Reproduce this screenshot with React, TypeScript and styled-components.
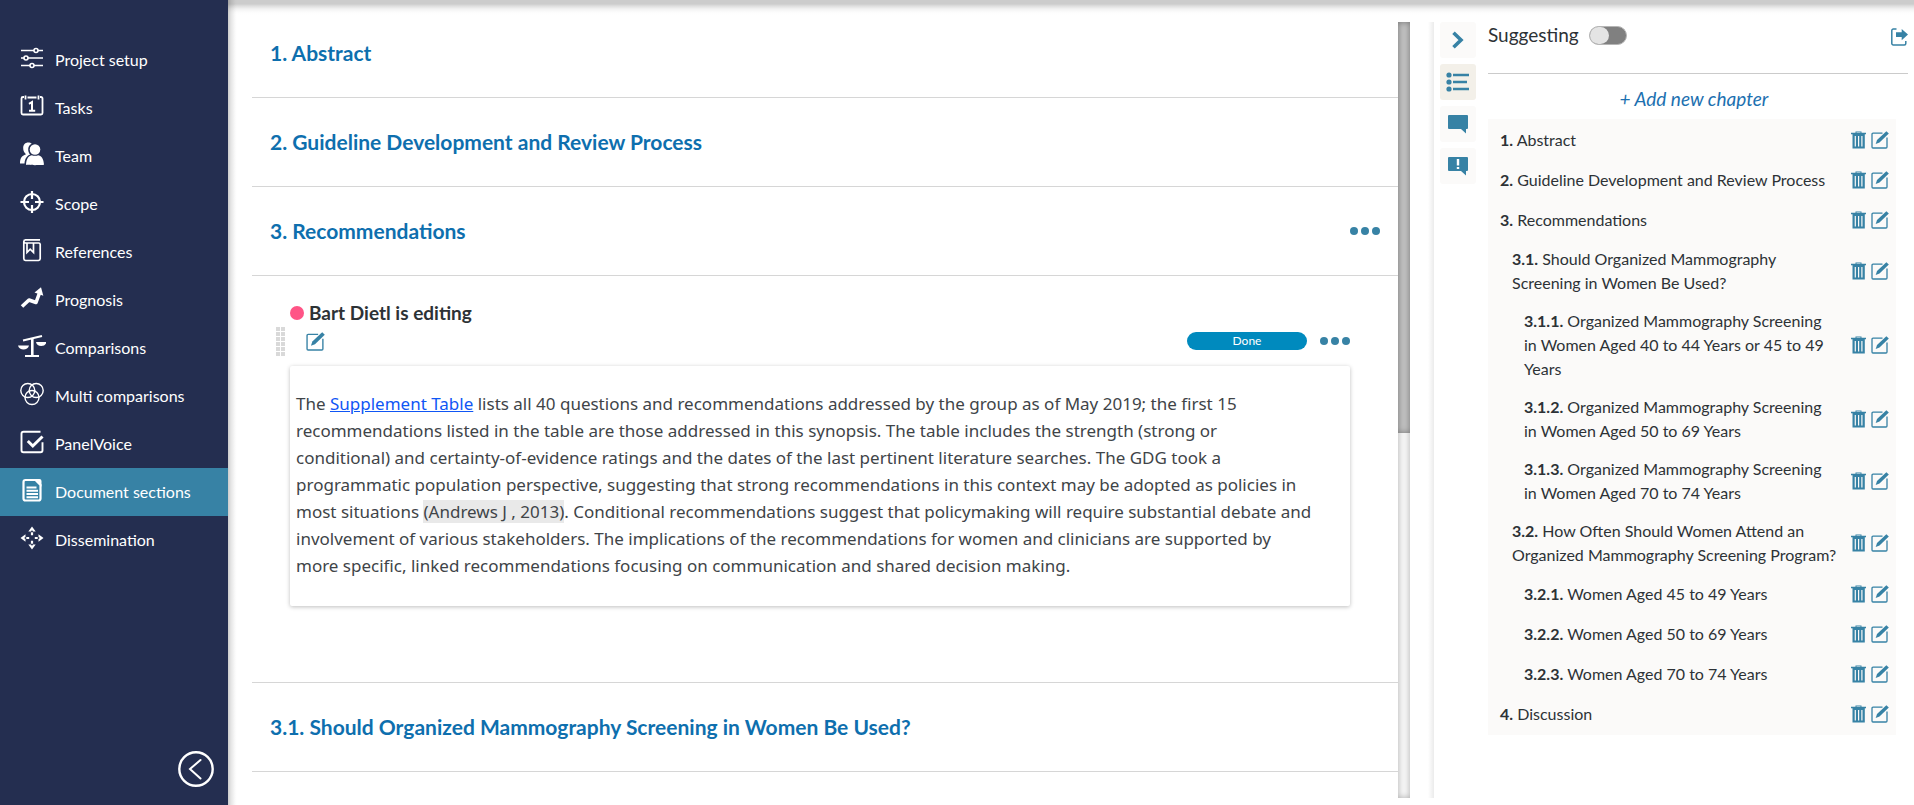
import React from "react";
import styled, { createGlobalStyle } from "styled-components";

const sans = `Lato, "Noto Sans", sans-serif`;
const teal = "#3782a5";
const navy = "#242e50";

const GlobalStyle = createGlobalStyle`
  *, *::before, *::after { box-sizing: border-box; }
  body { margin: 0; background: #fff; color: #2d3236; font-family: ${sans}; }
  button { font-family: inherit; padding: 0; border: 0; background: none; cursor: pointer; }
  h2, p, ol, ul { margin: 0; padding: 0; }
  ul, ol { list-style: none; }
  svg { display: block; }
`;

const Page = styled.div`
  display: flex;
  height: 100vh;
  overflow: hidden;
`;

const Sidebar = styled.nav`
  display: flex;
  flex-direction: column;
  justify-content: space-between;
  flex: none;
  width: 228px;
  padding: 36px 0 18px;
  background: ${navy};
`;

const NavLink = styled.a<{ $active?: boolean }>`
  display: flex;
  align-items: center;
  gap: 9px;
  height: 48px;
  padding: 0 0 2px 18px;
  background: ${(p) => (p.$active ? teal : "transparent")};
  color: #fff;
  font-size: 16px;
  line-height: 24px;
  text-decoration: none;

  svg { flex: none; margin-bottom: 2px; }
  span { padding-top: 2px; }
`;

const CollapseButton = styled.button`
  align-self: flex-end;
  margin-right: 14px;
  color: #fff;
`;

const Workspace = styled.div`
  display: flex;
  flex: 1;
  min-width: 0;
  padding: 22px 0 7px 24px;
  background:
    linear-gradient(to bottom, rgba(0, 0, 0, 0.2) 4px, rgba(0, 0, 0, 0.13) 6px, rgba(0, 0, 0, 0.05) 9px, rgba(0, 0, 0, 0.01) 12px, transparent 15px),
    linear-gradient(to right, rgba(0, 0, 0, 0.2), rgba(0, 0, 0, 0.1) 3px, rgba(0, 0, 0, 0.02) 7px, transparent 9px);
`;

const Document = styled.main`
  flex: 1;
  min-width: 0;
  overflow: hidden;
`;

const ScrollTrack = styled.div`
  flex: none;
  width: 12px;
  margin-right: 16px;
  background: #f6f6f6;
  box-shadow: inset 0 0 6px rgba(0, 0, 0, 0.3);
`;

const ScrollThumb = styled.div`
  height: 53%;
  background: #c0c0c0;
  box-shadow: inset 0 0 6px rgba(0, 0, 0, 0.4);
`;

const SectionHeader = styled.header<{ $first?: boolean }>`
  display: flex;
  align-items: center;
  justify-content: space-between;
  height: ${(p) => (p.$first ? 76 : 89)}px;
  padding: 0 18px ${(p) => (p.$first ? 14 : 0)}px;
  border-bottom: 1px solid #d6d6d6;
`;

const SectionTitle = styled.h2`
  color: #0e6fae;
  font-size: 21px;
  font-weight: 700;
  line-height: 28px;
`;

const DotsButton = styled.button`
  display: flex;
  gap: 3px;

  i { width: 8px; height: 8px; border-radius: 50%; background: ${teal}; }
`;

const SectionBody = styled.section`
  padding: 23px 48px 76px 24px;
  border-bottom: 1px solid #d6d6d6;
`;

const Editing = styled.div`
  display: flex;
  align-items: center;
  gap: 5px;
  padding-left: 14px;
  font-size: 19px;
  font-weight: 700;
  line-height: 27px;

  &::before { content: ""; width: 14px; height: 14px; border-radius: 50%; background: #ff5486; }
`;

const BlockTools = styled.div`
  display: flex;
  align-items: center;
  height: 30px;
  margin-bottom: 10px;
`;

const DragHandle = styled.div`
  display: grid;
  grid-template-columns: 4px 4px;
  grid-auto-rows: 4px;
  gap: 1px;
  margin-right: 21px;

  i { background: #d9d9d9; }
`;

const IconButton = styled.button`
  display: block;
  color: ${teal};
`;

const DoneButton = styled.button`
  width: 120px;
  height: 18px;
  margin: 0 13px 0 auto;
  border-radius: 9px;
  background: #008abe;
  color: #fff;
  font-size: 12px;
  line-height: 18px;
`;

const Editor = styled.div`
  margin-left: 14px;
  padding: 24px 0 27px 6px;
  border-radius: 2px;
  box-shadow: 0 1px 4px rgba(0, 0, 0, 0.26);
  color: #404448;
  font-family: "Noto Sans", sans-serif;
  font-size: 17px;
  line-height: 27px;

  a { color: #0f56f5; }
`;

const Citation = styled.span`
  background: #e9e9e9;
`;

const Panel = styled.aside`
  display: flex;
  flex: none;
  gap: 12px;
  width: 488px;
  padding: 0 6px 0 0;
`;

const PanelTabs = styled.div`
  display: flex;
  flex-direction: column;
  gap: 6px;
  padding-left: 14px;
  background: linear-gradient(to right, transparent 2px, rgba(0, 0, 0, 0.08) 8px, transparent 8px);
`;

const PanelTab = styled.button<{ $active?: boolean }>`
  display: flex;
  align-items: center;
  justify-content: center;
  width: 36px;
  height: 36px;
  border-radius: 3px;
  background: ${(p) => (p.$active ? "#f3f0e9" : "#fbfaf9")};
  color: ${teal};
`;

const Outline = styled.div`
  flex: 1;
  min-width: 0;
`;

const OutlineBar = styled.div`
  display: flex;
  align-items: flex-start;
  justify-content: space-between;
  height: 52px;
  border-bottom: 1px solid #cbcbcb;

  > button { margin-top: 6px; }
`;

const SuggestLabel = styled.label`
  display: flex;
  align-items: center;
  gap: 10px;
  font-size: 19px;
  line-height: 26px;
`;

const Switch = styled.input`
  display: flex;
  appearance: none;
  width: 38px;
  height: 19px;
  margin: 0;
  border: 1px solid #b5b5b5;
  border-radius: 10px;
  background: #808080;

  &::before {
    content: "";
    width: 19px;
    height: 17px;
    border-radius: 9px;
    background: #e4e4e4;
  }
`;

const AddChapter = styled.button`
  display: block;
  width: 100%;
  height: 45px;
  padding: 4px 8px 0 0;
  color: #1c70b0;
  font-size: 19px;
  font-style: italic;
  line-height: 28px;
`;

const ChapterList = styled.ol`
  width: calc(100% - 12px);
  padding: 1px 0;
  background: #fbfaf9;
`;

const ChapterRow = styled.li<{ $depth: number }>`
  display: flex;
  align-items: center;
  gap: 5px;
  min-height: 40px;
  padding: 7px 7px 7px ${(p) => 12 + p.$depth * 12}px;
  font-size: 16px;
  line-height: 24px;

  > span { flex: 1; padding-right: ${(p) => (p.$depth > 1 ? 12 : 0)}px; }
`;

type IconName =
  | "setup" | "tasks" | "team" | "scope" | "references" | "prognosis"
  | "comparisons" | "multi" | "panel" | "document" | "dissemination";

const S = { fill: "none", stroke: "currentColor" };

const navShapes: Record<IconName, React.ReactNode> = {
  setup: (
    <g {...S} strokeWidth="1.6">
      <path d="M3 6.5h13M20 6.5h5M3 14h3M10 14h15M3 21.500h9M16 21.500h9" />
      <circle cx="18" cy="6.500" r="2" /><circle cx="8" cy="14" r="2" /><circle cx="14" cy="21.500" r="2" />
    </g>
  ),
  tasks: (
    <>
      <path {...S} strokeWidth="1.8" d="M6 5H5a1.500 1.500 0 0 0-1.500 1.500V21A1.500 1.500 0 0 0 5 22.500h18a1.500 1.500 0 0 0 1.500-1.500V6.500A1.500 1.500 0 0 0 23 5h-1M9.500 5.500h9M7.500 3.500v4M20.500 3.500v4" />
      <path {...S} strokeWidth="2" d="M11 11.800l3-1.800v8.800M11 18.800h6.200" />
    </>
  ),
  team: (
    <g fill="currentColor">
      <path d="M2 23.500c0-5 1.500-7.800 6-9.300C5.800 12.500 5.200 10.400 5.200 8c0-3.300 2-5.500 5-5.500 1.500 0 2.700.5 3.500 1.300-2.500 1.200-3.700 3.400-3.500 6.200.1 1.900.9 3.500 2 4.600-3.500 1.500-5.300 4-5.700 8.900z" />
      <circle cx="17" cy="9.500" r="5.300" />
      <path d="M8 24.800c.2-5.800 2.800-9.500 6-9.500.8.7 5.200.7 6 0 3.200 0 5.800 3.700 6 9.500-.6.5-17.400.5-18 0z" />
    </g>
  ),
  scope: (
    <g {...S} strokeWidth="2.200">
      <circle cx="14" cy="14" r="8" />
      <path d="M14 3v8M14 17v8M2.500 14H11M17 14h8.500" />
    </g>
  ),
  references: (
    <g {...S} strokeWidth="1.700">
      <path d="M22 3.800H7.500A2 2 0 0 0 5.800 5.500v17A2 2 0 0 0 7.500 24.500h13a2 2 0 0 0 1.700-1.800V8.300A1.500 1.500 0 0 0 20.800 7H7.500a1.600 1.600 0 0 1 0-3.200" />
      <path d="M9 7v9.500l3.200-3.300 3.300 3.300V7" />
    </g>
  ),
  prognosis: (
    <>
      <path {...S} strokeWidth="3.600" strokeLinejoin="round" d="M4 22.500l7-6.500 7 2.500L21.500 9" />
      <path fill="currentColor" d="M16.500 8.500L23 3.200l2.300 8.600z" />
    </>
  ),
  comparisons: (
    <>
      <path {...S} strokeWidth="2" d="M5 8.500l19-4.500M7 24h14" />
      <path {...S} strokeWidth="2.600" d="M14.300 6v18" />
      <path fill="currentColor" d="M0 13.500h11c-.5 2.800-3 4-5.500 4S.5 16.300 0 13.500zM18 10h10.500c-.5 2.800-2.700 4-5.300 4s-4.800-1.200-5.200-4z" />
    </>
  ),
  multi: (
    <g {...S} strokeWidth="1.400">
      <circle cx="9.800" cy="10.500" r="7" /><circle cx="18.200" cy="10.500" r="7" /><circle cx="14" cy="17.500" r="7" />
    </g>
  ),
  panel: (
    <>
      <path {...S} strokeWidth="1.900" d="M22.500 3.800H5.500a2 2 0 0 0-2 2v16.500a2 2 0 0 0 2 2h17a2 2 0 0 0 2-2v-8" />
      <path {...S} strokeWidth="3" d="M9.800 13l5 5 9.700-9.500" />
    </>
  ),
  document: (
    <>
      <path {...S} strokeWidth="2.200" d="M7.500 4h10l5 5v13.500a2 2 0 0 1-2 2h-13a2 2 0 0 1-2-2V6a2 2 0 0 1 2-2z" />
      <path fill="currentColor" d="M15.500 3h6a2 2 0 0 1 2 2v6c-1.200-4-4-6.500-8-8z" />
      <path {...S} strokeWidth="1.900" d="M8.500 11.500h10M8.500 14.800h11.500M8.500 18h11.500M8.500 21.200h11.500" />
    </>
  ),
  dissemination: (
    <>
      <path fill="currentColor" d="M14 2.500l3.700 5h-7.400zM14 25.500l3.700-5h-7.400zM2.500 14l5-3.700v7.400zM25.500 14l-5-3.700v7.400z" />
      <path {...S} strokeWidth="2.200" d="M14 6v5.200M14 16.800V22M6 14h5.200M16.800 14H22" />
      <g fill={navy}><circle cx="14" cy="7.500" r="1" /><circle cx="14" cy="20.500" r="1" /><circle cx="7.500" cy="14" r="1" /><circle cx="20.500" cy="14" r="1" /></g>
    </>
  ),
};

const NavIcon = ({ name }: { name: IconName }) => (
  <svg width="28" height="28" viewBox="0 0 28 28" aria-hidden="true">{navShapes[name]}</svg>
);

const EditIcon = ({ size = 18 }: { size?: number }) => (
  <svg width={size} height={size} viewBox="0 0 18 18" aria-hidden="true">
    <path {...S} strokeWidth="1.300" d="M11.500 2.200H2a1 1 0 0 0-1 1V16a1 1 0 0 0 1 1h13a1 1 0 0 0 1-1V6.500" />
    <path fill="currentColor" d="M4.700 13l1.300-4L14.300 1.200 15.400.2l2.400 2.300-1 1L8.500 11.600z" />
  </svg>
);

const TrashIcon = () => (
  <svg width="15" height="18" viewBox="0 0 15 18" aria-hidden="true">
    <path fill="currentColor" fillRule="evenodd" d="M0 1.700h4.500V.4h6v1.300H15v1.600h-1.200V17.400H1.500V3.300H0zM5.500 1.200v.6h4v-.6zM3.700 5v10.500h1.200V5zM7 5v10.500h1.200V5zM10.300 5v10.500h1.200V5z" />
  </svg>
);

const Dots = ({ label }: { label: string }) => (
  <DotsButton type="button" aria-label={label}><i /><i /><i /></DotsButton>
);

const navItems: { icon: IconName; label: string }[] = [
  { icon: "setup", label: "Project setup" },
  { icon: "tasks", label: "Tasks" },
  { icon: "team", label: "Team" },
  { icon: "scope", label: "Scope" },
  { icon: "references", label: "References" },
  { icon: "prognosis", label: "Prognosis" },
  { icon: "comparisons", label: "Comparisons" },
  { icon: "multi", label: "Multi comparisons" },
  { icon: "panel", label: "PanelVoice" },
  { icon: "document", label: "Document sections" },
  { icon: "dissemination", label: "Dissemination" },
];

const chapters: [string, string][] = [
  ["1.", "Abstract"],
  ["2.", "Guideline Development and Review Process"],
  ["3.", "Recommendations"],
  ["3.1.", "Should Organized Mammography Screening in Women Be Used?"],
  ["3.1.1.", "Organized Mammography Screening in Women Aged 40 to 44 Years or 45 to 49 Years"],
  ["3.1.2.", "Organized Mammography Screening in Women Aged 50 to 69 Years"],
  ["3.1.3.", "Organized Mammography Screening in Women Aged 70 to 74 Years"],
  ["3.2.", "How Often Should Women Attend an Organized Mammography Screening Program?"],
  ["3.2.1.", "Women Aged 45 to 49 Years"],
  ["3.2.2.", "Women Aged 50 to 69 Years"],
  ["3.2.3.", "Women Aged 70 to 74 Years"],
  ["4.", "Discussion"],
];

export default function App() {
  return (
    <Page>
      <GlobalStyle />
      <Sidebar aria-label="Project">
        <ul>
          {navItems.map(({ icon, label }) => (
            <li key={icon}>
              <NavLink href="#" $active={icon === "document"}>
                <NavIcon name={icon} />
                <span>{label}</span>
              </NavLink>
            </li>
          ))}
        </ul>
        <CollapseButton type="button" aria-label="Collapse menu">
          <svg width="36" height="36" viewBox="0 0 36 36" aria-hidden="true">
            <circle {...S} strokeWidth="2.400" cx="18" cy="18" r="16.700" />
            <path {...S} strokeWidth="2" strokeLinecap="round" d="M22.500 9L12 18l10.500 9.500" />
          </svg>
        </CollapseButton>
      </Sidebar>

      <Workspace>
        <Document>
          <SectionHeader $first><SectionTitle>1. Abstract</SectionTitle></SectionHeader>
          <SectionHeader><SectionTitle>2. Guideline Development and Review Process</SectionTitle></SectionHeader>
          <SectionHeader>
            <SectionTitle>3. Recommendations</SectionTitle>
            <Dots label="Chapter options" />
          </SectionHeader>
          <SectionBody>
            <Editing>Bart Dietl is editing</Editing>
            <BlockTools>
              <DragHandle>{Array.from({ length: 12 }, (_, i) => <i key={i} />)}</DragHandle>
              <IconButton type="button" aria-label="Edit block"><EditIcon size={19} /></IconButton>
              <DoneButton type="button">Done</DoneButton>
              <Dots label="Block options" />
            </BlockTools>
            <Editor>
              <p>
                The <a href="#">Supplement Table</a> lists all 40 questions and recommendations addressed by the group
                as of May 2019; the first 15<br />
                recommendations listed in the table are those addressed in this synopsis. The table includes the
                strength (strong or<br />
                conditional) and certainty-of-evidence ratings and the dates of the last pertinent literature searches.
                The GDG took a<br />
                programmatic population perspective, suggesting that strong recommendations in this context may be
                adopted as policies in<br />
                most situations <Citation>(Andrews J , 2013)</Citation>. Conditional recommendations suggest that
                policymaking will require substantial debate and<br />
                involvement of various stakeholders. The implications of the recommendations for women and clinicians
                are supported by<br />
                more specific, linked recommendations focusing on communication and shared decision making.
              </p>
            </Editor>
          </SectionBody>
          <SectionHeader>
            <SectionTitle>3.1. Should Organized Mammography Screening in Women Be Used?</SectionTitle>
          </SectionHeader>
        </Document>
        <ScrollTrack><ScrollThumb /></ScrollTrack>

        <Panel>
          <PanelTabs>
            <PanelTab type="button" aria-label="Close panel">
              <svg width="14" height="18" viewBox="0 0 14 18" aria-hidden="true">
                <path {...S} strokeWidth="3.600" d="M2.500 1.800L10 9l-7.500 7.200" />
              </svg>
            </PanelTab>
            <PanelTab type="button" aria-label="Outline" $active>
              <svg width="24" height="20" viewBox="0 0 24 20" aria-hidden="true">
                <g fill="currentColor"><circle cx="3" cy="3" r="2.600" /><circle cx="3" cy="10" r="2.600" /><circle cx="3" cy="17" r="2.600" /></g>
                <path {...S} strokeWidth="2.400" d="M7 3h16M7 10h14M7 17h16" />
              </svg>
            </PanelTab>
            <PanelTab type="button" aria-label="Comments">
              <svg width="20" height="20" viewBox="0 0 20 20" aria-hidden="true">
                <path fill="currentColor" d="M1 1h18a1 1 0 0 1 1 1v12a1 1 0 0 1-1 1h-1v4.500L13 15H1a1 1 0 0 1-1-1V2a1 1 0 0 1 1-1z" />
              </svg>
            </PanelTab>
            <PanelTab type="button" aria-label="Alerts">
              <svg width="20" height="20" viewBox="0 0 20 20" aria-hidden="true">
                <path fill="currentColor" d="M1 1h18a1 1 0 0 1 1 1v12a1 1 0 0 1-1 1h-1v4.500L13 15H1a1 1 0 0 1-1-1V2a1 1 0 0 1 1-1z" />
                <path fill="#fff" d="M8.800 3h2.400v6.500H8.800zM8.800 11h2.400v2H8.800z" />
              </svg>
            </PanelTab>
          </PanelTabs>
          <Outline>
            <OutlineBar>
              <SuggestLabel>Suggesting<Switch type="checkbox" role="switch" /></SuggestLabel>
              <IconButton type="button" aria-label="Export">
                <svg width="17" height="19" viewBox="0 0 17 19" aria-hidden="true">
                  <path {...S} strokeWidth="1.500" d="M5.500 1H2.300A1.500 1.500 0 0 0 .8 2.500v13A1.500 1.500 0 0 0 2.300 17h11a1.500 1.500 0 0 0 1.500-1.500V13" />
                  <path fill="currentColor" d="M5 4.200h5.700V1L17 6.600l-6.300 5.600V9H5z" />
                </svg>
              </IconButton>
            </OutlineBar>
            <AddChapter type="button">+ Add new chapter</AddChapter>
            <ChapterList>
              {chapters.map(([number, title]) => (
                <ChapterRow key={number} $depth={number.split(".").length - 2}>
                  <span><b>{number}</b> {title}</span>
                  <IconButton type="button" aria-label={`Delete ${title}`}><TrashIcon /></IconButton>
                  <IconButton type="button" aria-label={`Edit ${title}`}><EditIcon /></IconButton>
                </ChapterRow>
              ))}
            </ChapterList>
          </Outline>
        </Panel>
      </Workspace>
    </Page>
  );
}
